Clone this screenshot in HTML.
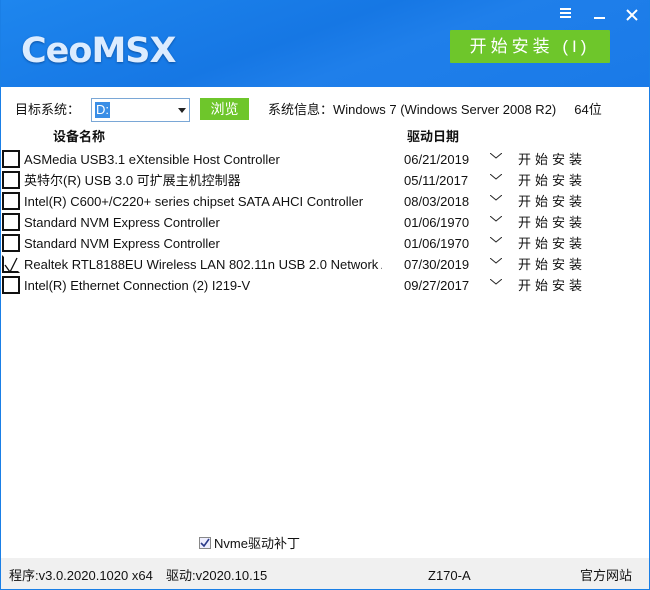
<!DOCTYPE html>
<html><head><meta charset="utf-8"><style>
*{margin:0;padding:0;box-sizing:border-box}
body{width:650px;height:590px;position:relative;overflow:hidden;background:#fff;font-family:"Liberation Sans","Noto Sans CJK SC",sans-serif;font-size:13px;line-height:17px;color:#111}
.frame{position:absolute;inset:0;border:1px solid #1a7fe6;border-top:none}
.hdr{position:absolute;left:0;top:0;width:650px;height:87px;background:linear-gradient(160deg,#1e86ee 0%,#1677e4 45%,#1f7fea 60%,#1a7ae8 100%)}
.logo{position:absolute;left:21px;top:31px;font-size:35px;line-height:40px;color:#dcecff;font-family:"DejaVu Sans","Liberation Sans",sans-serif;font-weight:bold;letter-spacing:-1px;text-shadow:0 1px 2px #0a4fa0}
.btn{position:absolute;left:450px;top:30px;width:160px;height:33px;background:#6ec62b;color:#fff;font-size:17px;text-align:center;line-height:33px;letter-spacing:4px;border-radius:1px}
.ic{position:absolute;color:#fff}
.abs{position:absolute;white-space:nowrap}
.cb{position:absolute;left:2px;width:18px;height:18px;border:2px solid #111;background:#fff}
.row{position:absolute;left:0;width:650px;height:21px}
.row .n{position:absolute;left:24px;top:2px;width:358px;overflow:hidden;white-space:nowrap}
.row .d{position:absolute;left:404px;top:2px}
.row .c{position:absolute;left:490px;top:4px}
.row .i{position:absolute;left:518px;top:2px;letter-spacing:4px}
.foot{position:absolute;left:1px;top:558px;width:648px;height:31px;background:#f0f0f0}
</style></head><body>
<div class="hdr">
 <div class="logo">CeoMSX</div>
 <div class="ic" style="left:560px;top:8px;width:11px">
  <div style="height:2px;background:#fff;margin-bottom:2px"></div><div style="height:2px;background:#fff;margin-bottom:2px"></div><div style="height:2px;background:#fff"></div></div>
 <div class="ic" style="left:594px;top:17px;width:11px;height:2px;background:#fff"></div>
 <svg class="ic" style="left:626px;top:9px" width="12" height="12"><path d="M1 1L11 11M11 1L1 11" stroke="#fff" stroke-width="2"/></svg>
 <div class="btn">开始安装 (I)</div>
</div>
<div class="frame"></div>
<div class="abs" style="left:15px;top:101px">目标系统：</div>
<div class="abs" style="left:91px;top:98px;width:99px;height:24px;border:1px solid #7aa7d6;background:#fff">
 <span style="position:absolute;left:3px;top:3px;background:#3a8ee6;color:#fff;padding:0 1px;line-height:16px">D:</span>
 <svg style="position:absolute;left:86px;top:9px" width="8" height="5"><path d="M0 0H8L4 5Z" fill="#222"/></svg>
</div>
<div class="abs" style="left:200px;top:98px;width:49px;height:22px;background:#6ec62b;color:#fff;text-align:center;line-height:22px;font-size:14px">浏览</div>
<div class="abs" style="left:268px;top:101px">系统信息：Windows 7 (Windows Server 2008 R2)&nbsp;&nbsp;&nbsp;&nbsp;&nbsp;64位</div>
<div class="abs" style="left:53px;top:128px;font-weight:bold">设备名称</div>
<div class="abs" style="left:407px;top:128px;font-weight:bold">驱动日期</div>

<div class="row" style="top:149px"><div class="cb" style="top:1px"></div><div class="n">ASMedia USB3.1 eXtensible Host Controller</div><div class="d">06/21/2019</div><svg class="c" width="12" height="6"><path d="M0 0L6 5L12 0" stroke="#222" fill="none"/></svg><div class="i">开始安装</div></div>
<div class="row" style="top:170px"><div class="cb" style="top:1px"></div><div class="n">英特尔(R) USB 3.0 可扩展主机控制器</div><div class="d">05/11/2017</div><svg class="c" width="12" height="6"><path d="M0 0L6 5L12 0" stroke="#222" fill="none"/></svg><div class="i">开始安装</div></div>
<div class="row" style="top:191px"><div class="cb" style="top:1px"></div><div class="n">Intel(R) C600+/C220+ series chipset SATA AHCI Controller</div><div class="d">08/03/2018</div><svg class="c" width="12" height="6"><path d="M0 0L6 5L12 0" stroke="#222" fill="none"/></svg><div class="i">开始安装</div></div>
<div class="row" style="top:212px"><div class="cb" style="top:1px"></div><div class="n">Standard NVM Express Controller</div><div class="d">01/06/1970</div><svg class="c" width="12" height="6"><path d="M0 0L6 5L12 0" stroke="#222" fill="none"/></svg><div class="i">开始安装</div></div>
<div class="row" style="top:233px"><div class="cb" style="top:1px"></div><div class="n">Standard NVM Express Controller</div><div class="d">01/06/1970</div><svg class="c" width="12" height="6"><path d="M0 0L6 5L12 0" stroke="#222" fill="none"/></svg><div class="i">开始安装</div></div>
<div class="row" style="top:254px"><div class="cb" style="top:1px;border-color:transparent;border-left-color:#111;border-bottom-color:#111"><svg style="position:absolute;left:0;top:0" width="16" height="16"><path d="M1 8L6 15L13 1" stroke="#111" stroke-width="1.3" fill="none"/></svg></div><div class="n">Realtek RTL8188EU Wireless LAN 802.11n USB 2.0 Network Adapter</div><div class="d">07/30/2019</div><svg class="c" width="12" height="6"><path d="M0 0L6 5L12 0" stroke="#222" fill="none"/></svg><div class="i">开始安装</div></div>
<div class="row" style="top:275px"><div class="cb" style="top:1px"></div><div class="n">Intel(R) Ethernet Connection (2) I219-V</div><div class="d">09/27/2017</div><svg class="c" width="12" height="6"><path d="M0 0L6 5L12 0" stroke="#222" fill="none"/></svg><div class="i">开始安装</div></div>

<div class="abs" style="left:199px;top:537px;width:12px;height:12px;border:1px solid #888;background:#eef">
 <svg style="position:absolute;left:0;top:0" width="10" height="10"><path d="M1 5L4 8L9 1" stroke="#2a3a8a" stroke-width="1.6" fill="none"/></svg></div>
<div class="abs" style="left:214px;top:535px">Nvme驱动补丁</div>
<div class="foot"></div>
<div class="abs" style="left:9px;top:567px">程序:v3.0.2020.1020 x64</div>
<div class="abs" style="left:166px;top:567px">驱动:v2020.10.15</div>
<div class="abs" style="left:428px;top:567px">Z170-A</div>
<div class="abs" style="left:580px;top:567px">官方网站</div>
</body></html>
